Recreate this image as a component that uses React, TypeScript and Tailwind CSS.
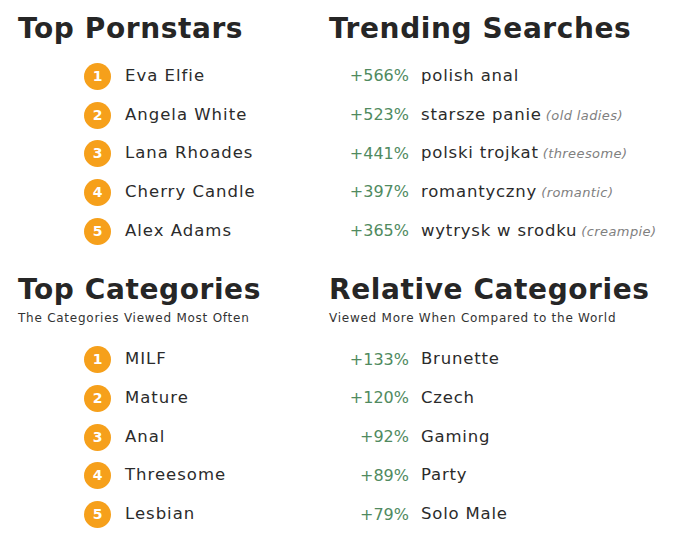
import React from 'react';

const font = { fontFamily: '"DejaVu Sans", "Liberation Sans", sans-serif' };

const pornstars = ['Eva Elfie', 'Angela White', 'Lana Rhoades', 'Cherry Candle', 'Alex Adams'];
const searches = [
    { pct: '+566%', term: 'polish anal' },
    { pct: '+523%', term: 'starsze panie', tr: 'old ladies' },
    { pct: '+441%', term: 'polski trojkat', tr: 'threesome' },
    { pct: '+397%', term: 'romantyczny', tr: 'romantic' },
    { pct: '+365%', term: 'wytrysk w srodku', tr: 'creampie' },
];
const categories = ['MILF', 'Mature', 'Anal', 'Threesome', 'Lesbian'];
const relative = [
    { pct: '+133%', term: 'Brunette' },
    { pct: '+120%', term: 'Czech' },
    { pct: '+92%', term: 'Gaming' },
    { pct: '+89%', term: 'Party' },
    { pct: '+79%', term: 'Solo Male' },
];

const Heading = ({ title, sub }: { title: string; sub?: string }) => (
    <div>
        <h2 className="text-[28px] leading-[32px] font-bold text-[#262626] tracking-[0.6px]">{title}</h2>
        {sub && <p className="mt-[4px] text-[12px] leading-[16px] text-[#333] tracking-[0.75px]">{sub}</p>}
    </div>
);

const RankList = ({ items }: { items: string[] }) => (
    <ul className="pl-[66px]">
        {items.map((name, i) => (
            <li key={name} className="flex items-center h-[38.7px]">
                <span className="flex items-center justify-center w-[27px] h-[27px] rounded-full bg-[#f6a01b] text-white text-[14px] font-bold">
                    {i + 1}
                </span>
                <span className="ml-[14px] text-[16.5px] text-[#2b2b2b] tracking-[1px]">{name}</span>
            </li>
        ))}
    </ul>
);

const TrendList = ({ items }: { items: { pct: string; term: string; tr?: string }[] }) => (
    <ul>
        {items.map((it) => (
            <li key={it.term} className="flex items-center h-[38.7px]">
                <span className="w-[80px] text-right text-[16px] text-[#508a60]">{it.pct}</span>
                <span className="ml-[12px] text-[16.5px] text-[#2b2b2b] tracking-[0.8px] whitespace-nowrap">
                    {it.term}
                    {it.tr && <span className="ml-[4px] text-[13px] italic text-[#808080] tracking-[0.4px]">({it.tr})</span>}
                </span>
            </li>
        ))}
    </ul>
);

export default function App() {
    return (
        <div style={font} className="w-[677px] h-[545px] bg-white pl-[18px] pt-[13px] grid grid-cols-[311px_1fr] content-start">
            <section>
                <Heading title="Top Pornstars" />
                <div className="mt-[12px]"><RankList items={pornstars} /></div>
            </section>
            <section>
                <Heading title="Trending Searches" />
                <div className="mt-[12px]"><TrendList items={searches} /></div>
            </section>
            <section className="mt-[24px]">
                <Heading title="Top Categories" sub="The Categories Viewed Most Often" />
                <div className="mt-[14px]"><RankList items={categories} /></div>
            </section>
            <section className="mt-[24px]">
                <Heading title="Relative Categories" sub="Viewed More When Compared to the World" />
                <div className="mt-[14px]"><TrendList items={relative} /></div>
            </section>
        </div>
    );
}
